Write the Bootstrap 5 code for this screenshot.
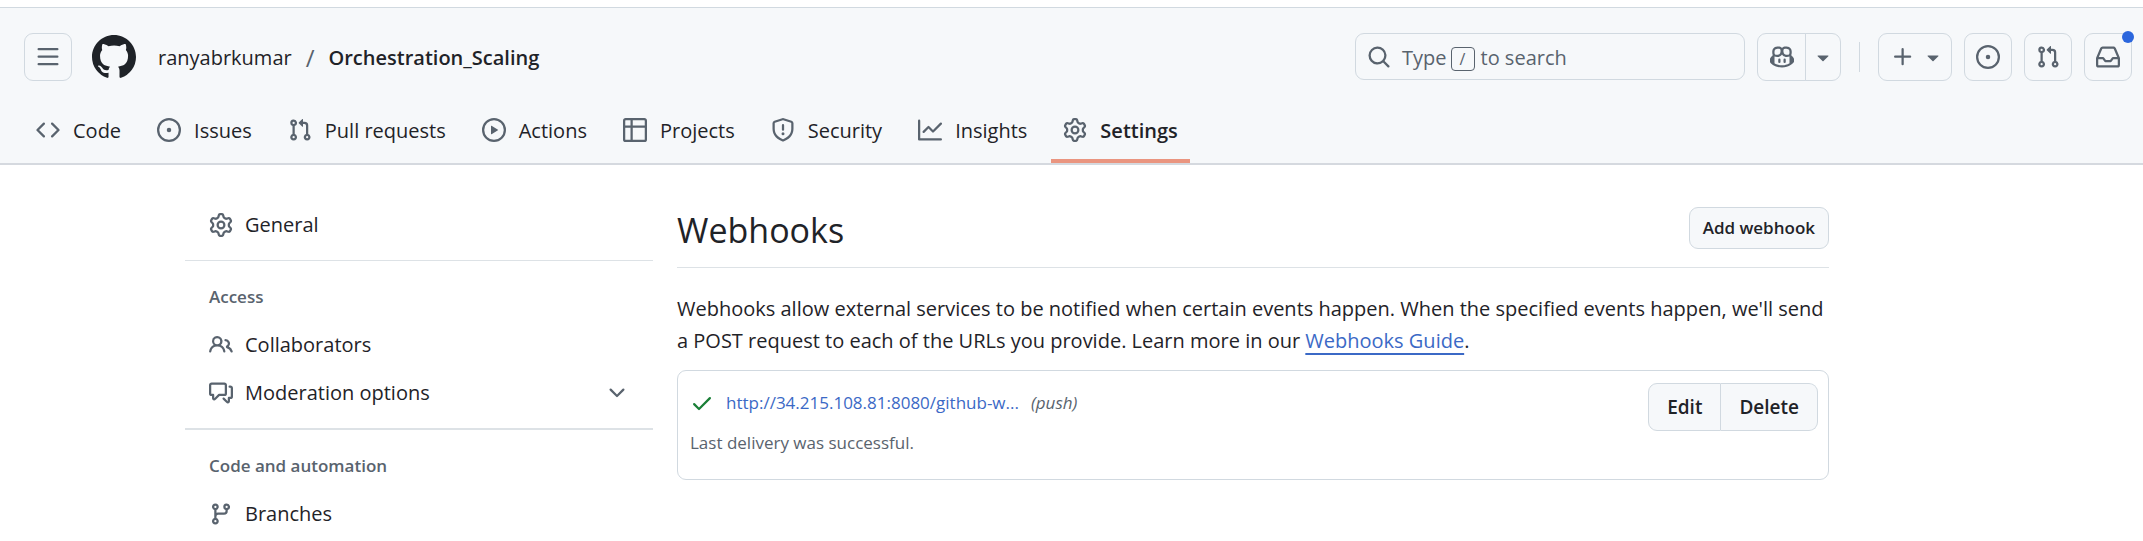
<!DOCTYPE html>
<html lang="en">
<head>
<meta charset="utf-8">
<meta name="viewport" content="width=device-width, initial-scale=1">
<title>Webhooks · Settings · ranyabrkumar/Orchestration_Scaling</title>
<link href="https://cdn.jsdelivr.net/npm/bootstrap@5.3.0/dist/css/bootstrap.min.css" rel="stylesheet">
<script defer src="https://cdn.jsdelivr.net/npm/bootstrap@5.3.0/dist/js/bootstrap.bundle.min.js"></script>
<style>
  :root { --ink:#1f2328; --muted:#59636e; --line:#d1d9e0; --panel:#f6f8fa; --blue:#3b69c6; }
  body { font-family:"Open Sans","Noto Sans",sans-serif; font-size:20px; line-height:32px; color:var(--ink); background:#fff; overflow-x:hidden; }
  a { color:inherit; text-decoration:none; }
  .oct { width:24px; height:24px; fill:currentColor; color:var(--muted); flex:none; display:block; }
  .semi { font-weight:600; }
  .site-head { margin-top:7px; background:var(--panel); border-top:1px solid var(--line); border-bottom:2px solid #d5d9df; }
  .top-bar { padding:25px 11px 0 24px; }
  .ctl { height:48px; border:1px solid var(--line); border-radius:9px; background:transparent; padding:0; display:flex; align-items:center; justify-content:center; color:var(--muted); }
  .ctl-sq { width:48px; }
  .logo { width:44px; height:44px; fill:var(--ink); display:block; }
  .crumbs { margin-left:22px; padding-top:2px; }
  .crumb-sep { color:var(--muted); font-size:24px; margin:0 14px; }
  .search-btn { width:390px; height:47px; justify-content:flex-start; padding:2px 11px 0; }
  .search-btn .oct { margin:0 11px 2px 0; }
  .search-btn kbd { background:none; color:var(--muted); border:1px solid var(--muted); border-radius:4px; width:24px; height:24px; font:16px/22px "Open Sans",sans-serif; padding:0; text-align:center; margin:2px 6px 0 4px; }
  .copilot-main { width:49px; border-radius:9px 0 0 9px; }
  .copilot-more { width:36px; border-radius:0 9px 9px 0; margin-left:-1px; }
  .bar-sep { width:1px; height:30px; background:var(--line); margin:0 18px; }
  .bar-actions { gap:12px; }
  .add-btn { width:74px; gap:6px; padding-left:5px; }
  .dot { position:absolute; top:-3px; right:-3px; width:12px; height:12px; border-radius:50%; background:#2b66dd; }
  .repo-tabs { padding:24px 24px 0; gap:12px; }
  .repo-tabs a { display:flex; align-items:center; gap:13px; padding:10px 12px 12px; height:58px; border-bottom:4px solid transparent; white-space:nowrap; }
  .repo-tabs a.active { border-color:#ea9580; font-weight:600; }
  .repo-tabs .oct { margin-bottom:3px; }
  .settings-wrap { width:100%; max-width:1668px; padding:36px 24px 0 0; margin-left:185px; gap:24px; }
  .side { width:468px; flex:none; }
  .side section { border-top:1px solid #dde2e6; padding:20px 0 11px; }
  .side .entry + section { margin-top:11px; }
  .side section + section { border-top-width:2px; }
  .side h2 { font-size:17px; line-height:32px; font-weight:600; color:var(--muted); margin:0 0 8px; padding:0 24px; }
  .side .entry { display:flex; align-items:center; gap:12px; height:48px; padding:0 24px; border:0; background:none; width:100%; text-align:left; color:var(--ink); }
  .main-col { min-width:0; }
  .page-head { border-bottom:1px solid #dde2e6; padding:6px 0 16px; }
  .page-head h1 { font-size:34px; line-height:42px; font-weight:400; margin:0; padding-top:2px; }
  .intro { margin:25px 0 13px; }
  .gh-btn { background:var(--panel); border:1px solid var(--line); color:var(--ink); font-weight:600; border-radius:9px; height:48px; font-size:19px; line-height:32px; padding:0 18px; }
  .gh-btn-sm { font-size:17px; height:42px; padding:0 13px; }
  .guide { color:var(--blue); text-decoration:underline 2px; text-underline-offset:5px; text-decoration-skip-ink:none; }
  .hook { border:1px solid var(--line); border-radius:9px; padding:12px 10px 0 12px; min-height:110px; font-size:17px; }
  .hook .url { color:var(--blue); margin:0 12px; }
  .hook .note { color:var(--muted); }
  .ok { color:#1a7f37; }
</style>
</head>
<body>
<svg class="d-none" aria-hidden="true">
  <symbol id="i-issue" viewBox="0 0 16 16"><path d="M8 9.5a1.5 1.5 0 1 0 0-3 1.5 1.5 0 0 0 0 3Z"/><path d="M8 0a8 8 0 1 1 0 16A8 8 0 0 1 8 0ZM1.5 8a6.5 6.5 0 1 0 13 0 6.5 6.5 0 0 0-13 0Z"/></symbol>
  <symbol id="i-pr" viewBox="0 0 16 16"><path d="M1.5 3.25a2.25 2.25 0 1 1 3 2.122v5.256a2.251 2.251 0 1 1-1.5 0V5.372A2.25 2.25 0 0 1 1.5 3.25Zm5.677-.177L9.573.677A.25.25 0 0 1 10 .854V2.5h1A2.5 2.5 0 0 1 13.5 5v5.628a2.251 2.251 0 1 1-1.5 0V5a1 1 0 0 0-1-1h-1v1.646a.25.25 0 0 1-.427.177L7.177 3.427a.25.25 0 0 1 0-.354ZM3.75 2.5a.75.75 0 1 0 0 1.5.75.75 0 0 0 0-1.5Zm0 9.5a.75.75 0 1 0 0 1.5.75.75 0 0 0 0-1.5Zm8.25.75a.75.75 0 1 0 1.5 0 .75.75 0 0 0-1.5 0Z"/></symbol>
  <symbol id="i-gear" viewBox="0 0 16 16"><path d="M8 0a8.2 8.2 0 0 1 .701.031C9.444.095 9.99.645 10.16 1.29l.288 1.107c.018.066.079.158.212.224.231.114.454.243.668.386.123.082.233.09.299.071l1.103-.303c.644-.176 1.392.021 1.82.63.27.385.506.792.704 1.218.315.675.111 1.422-.364 1.891l-.814.806c-.049.048-.098.147-.088.294.016.257.016.515 0 .772-.01.147.038.246.088.294l.814.806c.475.469.679 1.216.364 1.891a7.977 7.977 0 0 1-.704 1.217c-.428.61-1.176.807-1.82.63l-1.102-.302c-.067-.019-.177-.011-.3.071a5.909 5.909 0 0 1-.668.386c-.133.066-.194.158-.211.224l-.29 1.106c-.168.646-.715 1.196-1.458 1.26a8.006 8.006 0 0 1-1.402 0c-.743-.064-1.289-.614-1.458-1.26l-.289-1.106c-.018-.066-.079-.158-.212-.224a5.738 5.738 0 0 1-.668-.386c-.123-.082-.233-.09-.299-.071l-1.103.303c-.644.176-1.392-.021-1.82-.63a8.12 8.12 0 0 1-.704-1.218c-.315-.675-.111-1.422.363-1.891l.815-.806c.05-.048.098-.147.088-.294a6.214 6.214 0 0 1 0-.772c.01-.147-.038-.246-.088-.294l-.815-.806C.635 6.045.431 5.298.746 4.623a7.92 7.92 0 0 1 .704-1.217c.428-.61 1.176-.807 1.82-.63l1.102.302c.067.019.177.011.3-.071.214-.143.437-.272.668-.386.133-.066.194-.158.211-.224l.29-1.106C6.009.645 6.556.095 7.299.03 7.53.01 7.764 0 8 0Zm-.571 1.525c-.036.003-.108.036-.137.146l-.289 1.105c-.147.561-.549.967-.998 1.189-.173.086-.34.183-.5.29-.417.278-.97.423-1.529.27l-1.103-.303c-.109-.03-.175.016-.195.045-.22.312-.412.644-.573.99-.014.031-.021.11.059.19l.815.806c.411.406.562.957.53 1.456a4.709 4.709 0 0 0 0 .582c.032.499-.119 1.05-.53 1.456l-.815.806c-.081.08-.073.159-.059.19.162.346.353.677.573.989.02.03.085.076.195.046l1.102-.303c.56-.153 1.113-.008 1.53.27.161.107.328.204.501.29.447.222.85.629.997 1.189l.289 1.105c.029.109.101.143.137.146a6.6 6.6 0 0 0 1.142 0c.036-.003.108-.036.137-.146l.289-1.105c.147-.561.549-.967.998-1.189.173-.086.34-.183.5-.29.417-.278.97-.423 1.529-.27l1.103.303c.109.029.175-.016.195-.045.22-.313.411-.644.573-.99.014-.031.021-.11-.059-.19l-.815-.806c-.411-.406-.562-.957-.53-1.456a4.709 4.709 0 0 0 0-.582c-.032-.499.119-1.05.53-1.456l.815-.806c.081-.08.073-.159.059-.19a6.464 6.464 0 0 0-.573-.989c-.02-.03-.085-.076-.195-.046l-1.102.303c-.56.153-1.113.008-1.53-.27a4.44 4.44 0 0 0-.501-.29c-.447-.222-.85-.629-.997-1.189l-.289-1.105c-.029-.11-.101-.143-.137-.146a6.6 6.6 0 0 0-1.142 0ZM11 8a3 3 0 1 1-6 0 3 3 0 0 1 6 0ZM9.5 8a1.5 1.5 0 1 0-3.001.001A1.5 1.5 0 0 0 9.5 8Z"/></symbol>
  <symbol id="i-caret" viewBox="0 0 16 16"><path d="m4.427 7.427 3.396 3.396a.25.25 0 0 0 .354 0l3.396-3.396A.25.25 0 0 0 11.396 7H4.604a.25.25 0 0 0-.177.427Z"/></symbol>
</svg>

<header class="site-head">
  <div class="top-bar d-flex align-items-start justify-content-between">
    <div class="d-flex align-items-center">
      <button type="button" class="ctl ctl-sq" aria-label="Open menu"><svg class="oct" viewBox="0 0 16 16"><path d="M1 2.75A.75.75 0 0 1 1.75 2h12.5a.75.75 0 0 1 0 1.5H1.75A.75.75 0 0 1 1 2.75Zm0 5A.75.75 0 0 1 1.75 7h12.5a.75.75 0 0 1 0 1.5H1.75A.75.75 0 0 1 1 7.75ZM1.75 12h12.5a.75.75 0 0 1 0 1.5H1.75a.75.75 0 0 1 0-1.5Z"/></svg></button>
      <a href="#" class="ms-3 ps-1" aria-label="Homepage"><svg class="logo" viewBox="0 0 16 16"><path d="M8 0c4.42 0 8 3.58 8 8a8.013 8.013 0 0 1-5.45 7.59c-.4.08-.55-.17-.55-.38 0-.27.01-1.13.01-2.2 0-.75-.25-1.23-.54-1.48 1.78-.2 3.65-.88 3.65-3.95 0-.88-.31-1.59-.82-2.15.08-.2.36-1.02-.08-2.12 0 0-.67-.22-2.2.82-.64-.18-1.32-.27-2-.27-.68 0-1.36.09-2 .27-1.53-1.03-2.2-.82-2.2-.82-.44 1.1-.16 1.92-.08 2.12-.51.56-.82 1.28-.82 2.15 0 3.06 1.86 3.75 3.64 3.95-.23.2-.44.55-.51 1.07-.46.21-1.61.55-2.33-.66-.15-.24-.6-.83-1.23-.82-.67.01-.27.38.01.53.34.19.73.9.82 1.13.16.45.68 1.31 2.69.94 0 .67.01 1.3.01 1.49 0 .21-.15.45-.55.38A7.995 7.995 0 0 1 0 8c0-4.42 3.58-8 8-8Z"/></svg></a>
      <nav class="crumbs d-flex" aria-label="Breadcrumb">
        <a href="#">ranyabrkumar</a>
        <span class="crumb-sep">/</span>
        <a href="#" class="semi">Orchestration_Scaling</a>
      </nav>
    </div>
    <div class="d-flex align-items-start">
      <button type="button" class="ctl search-btn me-2">
        <svg class="oct" viewBox="0 0 16 16"><path d="M10.68 11.74a6 6 0 0 1-7.922-8.982 6 6 0 0 1 8.982 7.922l3.04 3.04a.749.749 0 0 1-.326 1.275.749.749 0 0 1-.734-.215ZM11.5 7a4.499 4.499 0 1 0-8.997 0A4.499 4.499 0 0 0 11.5 7Z"/></svg>
        <span>Type</span><kbd>/</kbd><span>to search</span>
      </button>
      <div class="d-flex ms-1">
        <button type="button" class="ctl copilot-main" aria-label="Copilot"><svg class="oct" viewBox="0 0 16 16"><path d="M7.998 15.035c-4.562 0-7.873-2.914-7.998-3.749V9.338c.085-.628.677-1.686 1.588-2.065.013-.07.024-.143.036-.218.029-.183.06-.384.126-.612-.201-.508-.254-1.084-.254-1.656 0-.87.128-1.769.693-2.484.579-.733 1.494-1.124 2.724-1.261 1.206-.134 2.262.034 2.944.765.05.053.096.108.139.165.044-.057.094-.112.143-.165.682-.731 1.738-.899 2.944-.765 1.23.137 2.145.528 2.724 1.261.566.715.693 1.614.693 2.484 0 .572-.053 1.148-.254 1.656.066.228.098.429.126.612.012.076.024.148.037.218.924.385 1.522 1.471 1.591 2.095v1.872c0 .766-3.351 3.795-8.002 3.795Zm0-1.485c2.28 0 4.584-1.11 5.002-1.433V7.862l-.023-.116c-.49.21-1.075.291-1.727.291-1.146 0-2.059-.327-2.71-.991A3.222 3.222 0 0 1 8 6.303a3.24 3.24 0 0 1-.544.743c-.65.664-1.563.991-2.71.991-.652 0-1.236-.081-1.727-.291l-.023.116v4.255c.419.323 2.722 1.433 5.002 1.433ZM6.762 2.83c-.193-.206-.637-.413-1.682-.297-1.019.113-1.479.404-1.713.7-.247.312-.369.789-.369 1.554 0 .793.129 1.171.308 1.371.162.181.519.379 1.442.379.853 0 1.339-.235 1.638-.54.315-.322.527-.827.617-1.553.117-.935-.037-1.395-.241-1.614Zm4.155-.297c-1.044-.116-1.488.091-1.681.297-.204.219-.359.679-.242 1.614.091.726.303 1.231.618 1.553.299.305.784.54 1.638.54.922 0 1.28-.198 1.442-.379.179-.2.308-.578.308-1.371 0-.765-.123-1.242-.37-1.554-.233-.296-.693-.587-1.713-.7Z"/><path d="M6.25 9.037a.75.75 0 0 1 .75.75v1.501a.75.75 0 0 1-1.5 0V9.787a.75.75 0 0 1 .75-.75Zm4.25.75v1.501a.75.75 0 0 1-1.5 0V9.787a.75.75 0 0 1 1.5 0Z"/></svg></button>
        <button type="button" class="ctl copilot-more" aria-label="More Copilot options"><svg class="oct"><use href="#i-caret"/></svg></button>
      </div>
      <div class="bar-sep align-self-center"></div>
      <div class="bar-actions d-flex">
        <button type="button" class="ctl add-btn" aria-label="Create new"><svg class="oct" viewBox="0 0 16 16"><path d="M7.75 2a.75.75 0 0 1 .75.75V7h4.25a.75.75 0 0 1 0 1.5H8.5v4.25a.75.75 0 0 1-1.5 0V8.5H2.75a.75.75 0 0 1 0-1.5H7V2.75A.75.75 0 0 1 7.75 2Z"/></svg><svg class="oct"><use href="#i-caret"/></svg></button>
        <a href="#" class="ctl ctl-sq" aria-label="Your issues"><svg class="oct"><use href="#i-issue"/></svg></a>
        <a href="#" class="ctl ctl-sq" aria-label="Your pull requests"><svg class="oct"><use href="#i-pr"/></svg></a>
        <a href="#" class="ctl ctl-sq position-relative" aria-label="Notifications"><svg class="oct" viewBox="0 0 16 16"><path d="M2.8 2.06A1.75 1.75 0 0 1 4.41 1h7.18c.7 0 1.333.417 1.61 1.06l2.74 6.395c.04.093.06.194.06.295v4.5A1.75 1.75 0 0 1 14.25 15H1.75A1.75 1.75 0 0 1 0 13.25v-4.5c0-.101.02-.202.06-.295Zm1.61.44a.25.25 0 0 0-.23.152L1.887 8H4.75a.75.75 0 0 1 .6.3L6.625 10h2.75l1.275-1.7a.75.75 0 0 1 .6-.3h2.863L11.82 2.652a.25.25 0 0 0-.23-.152Zm10.09 7h-2.875l-1.275 1.7a.75.75 0 0 1-.6.3h-3.5a.75.75 0 0 1-.6-.3L4.375 9.5H1.5v3.75c0 .138.112.25.25.25h12.5a.25.25 0 0 0 .25-.25Z"/></svg><span class="dot"></span></a>
      </div>
    </div>
  </div>
  <nav class="repo-tabs d-flex" aria-label="Repository">
    <a href="#"><svg class="oct" viewBox="0 0 16 16"><path d="m11.28 3.22 4.25 4.25a.75.75 0 0 1 0 1.06l-4.25 4.25a.749.749 0 0 1-1.275-.326.749.749 0 0 1 .215-.734L13.94 8l-3.72-3.72a.749.749 0 0 1 .326-1.275.749.749 0 0 1 .734.215Zm-6.56 0a.751.751 0 0 1 1.042.018.751.751 0 0 1 .018 1.042L2.06 8l3.72 3.72a.749.749 0 0 1-.326 1.275.749.749 0 0 1-.734-.215L.47 8.53a.75.75 0 0 1 0-1.06Z"/></svg>Code</a>
    <a href="#"><svg class="oct"><use href="#i-issue"/></svg>Issues</a>
    <a href="#"><svg class="oct"><use href="#i-pr"/></svg>Pull requests</a>
    <a href="#"><svg class="oct" viewBox="0 0 16 16"><path d="M8 0a8 8 0 1 1 0 16A8 8 0 0 1 8 0ZM1.5 8a6.5 6.5 0 1 0 13 0 6.5 6.5 0 0 0-13 0Zm4.879-2.773 4.264 2.559a.25.25 0 0 1 0 .428l-4.264 2.559A.25.25 0 0 1 6 10.559V5.442a.25.25 0 0 1 .379-.215Z"/></svg>Actions</a>
    <a href="#"><svg class="oct" viewBox="0 0 16 16"><path d="M0 1.75C0 .784.784 0 1.75 0h12.5C15.216 0 16 .784 16 1.75v12.5A1.75 1.75 0 0 1 14.25 16H1.75A1.75 1.75 0 0 1 0 14.25ZM6.5 6.5v8h7.75a.25.25 0 0 0 .25-.25V6.5Zm8-1.5V1.75a.25.25 0 0 0-.25-.25H6.5V5Zm-13 1.5v7.75c0 .138.112.25.25.25H5v-8ZM5 5V1.5H1.75a.25.25 0 0 0-.25.25V5Z"/></svg>Projects</a>
    <a href="#"><svg class="oct" viewBox="0 0 16 16"><path d="M7.467.133a1.748 1.748 0 0 1 1.066 0l5.25 1.68A1.75 1.75 0 0 1 15 3.48V7c0 1.566-.32 3.182-1.303 4.682-.983 1.498-2.585 2.813-5.032 3.855a1.697 1.697 0 0 1-1.33 0c-2.447-1.042-4.049-2.357-5.032-3.855C1.32 10.182 1 8.566 1 7V3.48a1.75 1.75 0 0 1 1.217-1.667Zm.61 1.429a.25.25 0 0 0-.153 0l-5.25 1.68a.25.25 0 0 0-.174.238V7c0 1.358.275 2.666 1.057 3.86.784 1.194 2.121 2.34 4.366 3.297a.196.196 0 0 0 .154 0c2.245-.956 3.582-2.104 4.366-3.298C13.225 9.666 13.5 8.36 13.5 7V3.48a.251.251 0 0 0-.174-.237l-5.25-1.68ZM8.75 4.75v3a.75.75 0 0 1-1.5 0v-3a.75.75 0 0 1 1.5 0ZM9 10.5a1 1 0 1 1-2 0 1 1 0 0 1 2 0Z"/></svg>Security</a>
    <a href="#"><svg class="oct" viewBox="0 0 16 16"><path d="M1.5 1.75V13.5h13.75a.75.75 0 0 1 0 1.5H.75a.75.75 0 0 1-.75-.75V1.75a.75.75 0 0 1 1.5 0Zm14.28 2.53-5.25 5.25a.75.75 0 0 1-1.06 0L7 7.06 4.28 9.78a.751.751 0 0 1-1.042-.018.751.751 0 0 1-.018-1.042l3.25-3.25a.75.75 0 0 1 1.06 0L10 7.94l4.72-4.72a.751.751 0 0 1 1.042.018.751.751 0 0 1 .018 1.042Z"/></svg>Insights</a>
    <a href="#" class="active" aria-current="page"><svg class="oct"><use href="#i-gear"/></svg>Settings</a>
  </nav>
</header>

<div class="settings-wrap d-flex">
  <nav class="side" aria-label="Settings">
    <a href="#" class="entry"><svg class="oct"><use href="#i-gear"/></svg>General</a>
    <section>
      <h2>Access</h2>
      <a href="#" class="entry"><svg class="oct" viewBox="0 0 16 16"><path d="M2 5.5a3.5 3.5 0 1 1 5.898 2.549 5.508 5.508 0 0 1 3.034 4.084.75.75 0 1 1-1.482.235 4 4 0 0 0-7.9 0 .75.75 0 0 1-1.482-.236A5.507 5.507 0 0 1 3.102 8.05 3.493 3.493 0 0 1 2 5.5ZM11 4a3.001 3.001 0 0 1 2.22 5.018 5.01 5.01 0 0 1 2.56 3.012.749.749 0 0 1-.885.954.752.752 0 0 1-.549-.514 3.507 3.507 0 0 0-2.522-2.372.75.75 0 0 1-.574-.73v-.352a.75.75 0 0 1 .416-.672A1.5 1.5 0 0 0 11 5.5.75.75 0 0 1 11 4Zm-5.5-.5a2 2 0 1 0-.001 3.999A2 2 0 0 0 5.5 3.5Z"/></svg>Collaborators</a>
      <button type="button" class="entry"><svg class="oct" viewBox="0 0 16 16"><path d="M1.75 1h8.5c.966 0 1.75.784 1.75 1.75v5.5A1.75 1.75 0 0 1 10.25 10H7.061l-2.574 2.573A1.458 1.458 0 0 1 2 11.543V10h-.25A1.75 1.75 0 0 1 0 8.25v-5.5C0 1.784.784 1 1.75 1ZM1.5 2.75v5.5c0 .138.112.25.25.25h1a.75.75 0 0 1 .75.75v2.19l2.72-2.72a.749.749 0 0 1 .53-.22h3.5a.25.25 0 0 0 .25-.25v-5.5a.25.25 0 0 0-.25-.25h-8.5a.25.25 0 0 0-.25.25Zm13 2a.25.25 0 0 0-.25-.25h-.5a.75.75 0 0 1 0-1.5h.5c.966 0 1.75.784 1.75 1.75v5.5A1.75 1.75 0 0 1 14.25 12H14v1.543a1.458 1.458 0 0 1-2.487 1.03L9.22 12.28a.749.749 0 0 1 .326-1.275.749.749 0 0 1 .734.215l2.22 2.22v-2.19a.75.75 0 0 1 .75-.75h1a.25.25 0 0 0 .25-.25Z"/></svg>Moderation options<svg class="oct ms-auto" viewBox="0 0 16 16"><path d="M12.78 5.22a.749.749 0 0 1 0 1.06l-4.25 4.25a.749.749 0 0 1-1.06 0L3.22 6.28a.749.749 0 1 1 1.06-1.06L8 8.939l3.72-3.719a.749.749 0 0 1 1.06 0Z"/></svg></button>
    </section>
    <section class="pb-0">
      <h2>Code and automation</h2>
      <a href="#" class="entry"><svg class="oct" viewBox="0 0 16 16"><path d="M9.5 3.25a2.25 2.25 0 1 1 3 2.122V6A2.5 2.5 0 0 1 10 8.5H6a1 1 0 0 0-1 1v1.128a2.251 2.251 0 1 1-1.5 0V5.372a2.25 2.25 0 1 1 1.5 0v1.836A2.493 2.493 0 0 1 6 7h4a1 1 0 0 0 1-1v-.628A2.25 2.25 0 0 1 9.5 3.25Zm-6 0a.75.75 0 1 0 1.5 0 .75.75 0 0 0-1.5 0Zm8.25-.75a.75.75 0 1 0 0 1.5.75.75 0 0 0 0-1.5ZM4.25 12a.75.75 0 1 0 0 1.5.75.75 0 0 0 0-1.5Z"/></svg>Branches</a>
    </section>
  </nav>
  <main class="main-col flex-grow-1">
    <div class="page-head d-flex justify-content-between align-items-start">
      <h1>Webhooks</h1>
      <button type="button" class="gh-btn gh-btn-sm">Add webhook</button>
    </div>
    <p class="intro">Webhooks allow external services to be notified when certain events happen. When the specified events happen, we'll send a POST request to each of the URLs you provide. Learn more in our <a href="#" class="guide">Webhooks Guide</a>.</p>
    <div class="hook d-flex justify-content-between align-items-start">
      <div class="pt-1">
        <div class="d-flex align-items-center">
          <svg class="oct ok" viewBox="0 0 16 16"><path d="M13.78 4.22a.75.75 0 0 1 0 1.06l-7.25 7.25a.75.75 0 0 1-1.06 0L2.22 9.28a.751.751 0 0 1 .018-1.042.751.751 0 0 1 1.042-.018L6 10.94l6.72-6.72a.75.75 0 0 1 1.06 0Z"/></svg>
          <a href="#" class="url">http://34.215.108.81:8080/github-w...</a>
          <em class="note">(push)</em>
        </div>
        <div class="note mt-2">Last delivery was successful.</div>
      </div>
      <div class="btn-group" role="group" aria-label="Webhook actions">
        <button type="button" class="gh-btn rounded-end-0">Edit</button>
        <button type="button" class="gh-btn rounded-start-0 border-start-0">Delete</button>
      </div>
    </div>
  </main>
</div>
</body>
</html>
